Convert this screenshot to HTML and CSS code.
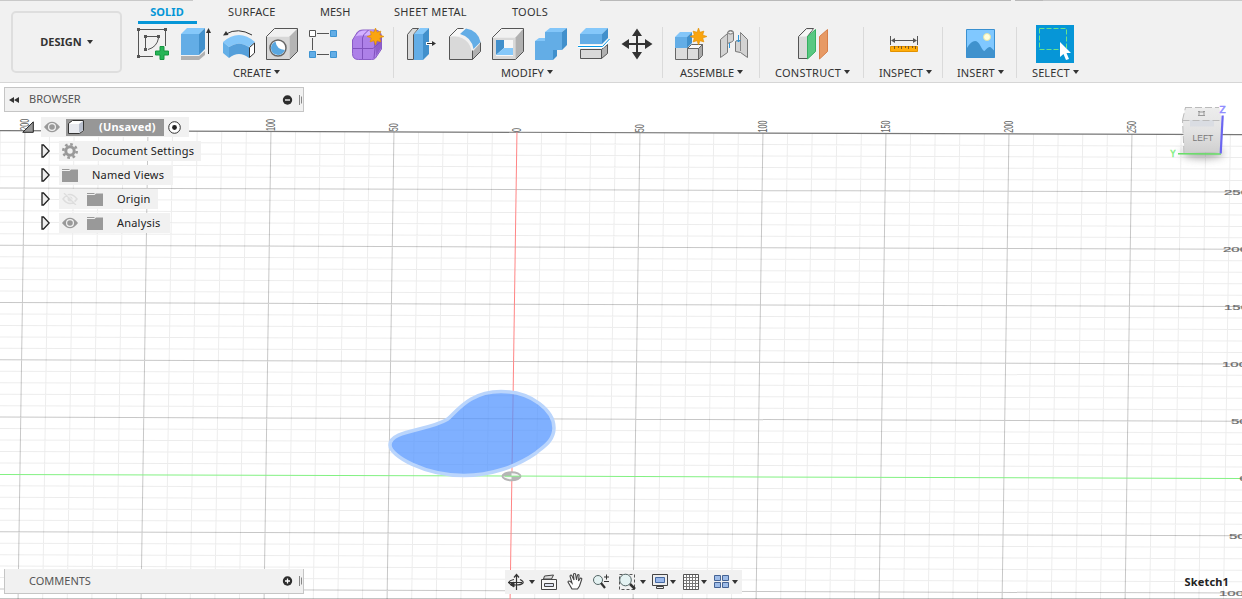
FILE: index.html
```html
<!DOCTYPE html>
<html lang="en">
<head>
<meta charset="utf-8">
<title>Sketch1</title>
<link rel="stylesheet" href="styles.css">
</head>
<body>
<svg class="defs" width="0" height="0">
  <symbol id="star" viewBox="-9 -9 18 18"><path fill="#faa50f" stroke="#e08e00" stroke-width=".6" d="M0-8.5 1.5-4.2 5.4-5.4 4.2-1.5 8.5 0 4.2 1.5 5.4 5.4 1.5 4.2 0 8.5-1.5 4.2-5.4 5.4-4.2 1.5-8.5 0-4.2-1.5-5.4-5.4-1.5-4.2z"/></symbol>
  <symbol id="eye" viewBox="0 0 16 12"><path fill="#999" d="M0 6Q8-4.500 16 6Q8 16.500 0 6z"/><circle cx="8" cy="6" r="4" fill="#f1f1f1"/><circle cx="8" cy="6" r="2.800" fill="#999"/></symbol>
  <symbol id="folder" viewBox="0 0 16 13"><path fill="#999" d="M0 0h7l1 1H0zM0 2h7.500l1.500-1.500h7V13H0z"/></symbol>
  <symbol id="closed" viewBox="0 0 9 14"><path fill="#eee" stroke="#222" stroke-width="1.300" d="M1 1h1.500L8.200 7 2.500 13H1z"/></symbol>
</svg>
<div class="app">
  <header class="toolbar">
    <div class="topline"><i class="edge first"></i><i class="edge second"></i><i class="edge third"></i><i class="edge fourth"></i></div>
    <div class="design-wrap"><button class="design">DESIGN<i class="caret"></i></button></div>
    <div class="ribbon">
      <nav class="tabs">
        <span class="tab active">SOLID</span><span class="tab surface">SURFACE</span><span class="tab mesh">MESH</span><span class="tab sheet">SHEET METAL</span><span class="tab tools">TOOLS</span>
      </nav>
      <div class="groups">
        <section class="group create">
          <div class="icons">
            <svg viewBox="132 25 43 38"><g fill="none" stroke="#555"><path d="M138.500 31v24M140 29.500h24M165.500 31v15M140 56.500h13M145.500 38v10M147 36.500h10M158.500 38Q157 47 148 49.500"/></g><path fill="#555" d="M137 28h3v3h-3zM164 28h3v3h-3zM137 55h3v3h-3zM144 35h3v3h-3zM157 35h3v3h-3zM144 48h3v3h-3z"/><path fill="#26b557" stroke="#169640" d="M160 46.500h4v4.500h4.500v4H164v4.500h-4v-4.500h-4.500v-4h4.500z"/></svg>
            <svg viewBox="175 25 43 38"><path fill="#b1b1b1" d="M181 56h18l6-5v4l-6 5h-18z"/><path fill="#63ade6" d="M181 34h18v21h-18z"/><path fill="#85c8fa" d="M181 34l6-6h18l-6 6z"/><path fill="#4190cc" d="M199 34l6-6v21l-6 6z"/><path d="M208.500 54V31" stroke="#333"/><path fill="#333" d="M206 33l2.500-5 2.500 5z"/></svg>
            <svg viewBox="218 25 43 38"><path fill="#83c6f9" d="M223 42Q239 28 255 42l-6 5q-10-7-20 0z"/><path fill="#64afe7" d="M223 42l6 5v11l-6-5z"/><path fill="#559fda" d="M229 47q10-7 20 0v11q-10-8-20 0z"/><path fill="#fff" stroke="#333" d="M249.500 47.500l5-4.500v10l-5 4.500z"/><path fill="none" stroke="#333" d="M226 34Q238 27 252 35"/><path fill="#333" d="M223 35.500l3-4.500 2.500 4z"/></svg>
            <svg viewBox="261 25 43 38"><path fill="#d7d7d7" d="M266.500 36.500h23v23h-23z"/><path fill="#f1f1f1" d="M266.500 36.500l8-8h23l-8 8z"/><path fill="#b5b5b5" d="M289.500 36.500l8-8v23l-8 8z"/><path fill="none" stroke="#555" d="M266.500 36.500l8-8h23v23l-8 8h-23z"/><circle cx="278" cy="48" r="8" fill="#fff" stroke="#666" stroke-width="1.500"/><path fill="#59a7e0" d="M275.500 41.500q1 8 9.500 8.500-2.500 5-7 5-7-1-7-7 0-4.500 4.500-6.500z"/></svg>
            <svg viewBox="304 25 43 38"><path d="M312.500 38v12M317 33.500h12M317 54.500h12" stroke="#555"/><path fill="#fff" stroke="#555" d="M309.500 30.500h6v6h-6z"/><path fill="#63ade6" stroke="#3e94d2" d="M330.500 30.500h6v6h-6zM330.500 51.500h6v6h-6zM309.500 51.500h6v6h-6z"/></svg>
            <svg viewBox="347 25 43 38"><path fill="#ad80e8" stroke="#8a5cc7" d="M352.500 40l5-8q2-2 5-2h12q6 0 7 6v13l-6 9q-1 1.500-4 1.500h-13q-6 0-6-6z"/><path fill="#d3b0ff" d="M354 38l5-6q2-1.500 5-1.500h10l-5 5h-9q-5 0-6 2.500z"/><path fill="#8051bd" d="M375 38l6-4v14l-5 8z" opacity=".7"/><path fill="none" stroke="#8051bd" d="M353 48.500h20l8-7M362.500 59V38q0-3 6-8M374 58q2-10 0-20"/><use href="#star" x="366.500" y="27.500" width="18" height="18"/></svg>
          </div>
          <div class="label">CREATE<i class="caret"></i></div>
        </section>
        <section class="group modify">
          <div class="icons">
            <svg viewBox="400 25 43 38"><path fill="#d9d9d9" stroke="#555" d="M407.500 34.500l5-6h6l-5 6v25h-6z"/><path fill="#63ade6" d="M414 34h9v26h-9z"/><path fill="#85c8fa" d="M414 34l6-6h9l-6 6z"/><path fill="#4190cc" d="M423 34l6-6v26l-6 6z"/><path d="M426 43.500h6" stroke="#fff" stroke-width="3"/><path d="M427 43.500h6" stroke="#333"/><path fill="#333" d="M432 41l4 2.500-4 2.500z"/></svg>
            <svg viewBox="443 25 43 38"><path fill="#d9d9d9" d="M449.500 36.500h5q18 1 18 23h-23z"/><path fill="#f7f7f7" d="M449.500 36l8-7.500h9l-7 7.500z"/><path fill="#b1b1b1" d="M473 51l7.500-8v8.500l-8 8z"/><path fill="none" stroke="#555" d="M449.500 36.500l8-8h6M449.500 36.500v23h23l8-8v-9M472.500 59.500v-9"/><path fill="#63ade6" d="M460 34l6-5.500q12 2 14.500 13.500l-7 7q-2-12-13.500-15z"/></svg>
            <svg viewBox="486 25 43 38"><path fill="#d9d9d9" d="M492.500 37.500h23v22h-23z"/><path fill="#f1f1f1" d="M492.500 37.500l9-9h22l-8 9z"/><path fill="#b1b1b1" d="M515.500 37.500l8-9v23l-8 8z"/><path fill="none" stroke="#555" d="M492.500 37.500l9-9h22v23l-8 8h-23z"/><path fill="#f7f7f7" d="M496 40h17v16h-17z"/><path fill="#418fcb" d="M496 40h8v8l-8 7z"/><path fill="#85c8fa" d="M496 55l8-7h9v7z"/></svg>
            <svg viewBox="529 25 43 38"><path fill="#63ade6" d="M535 41h10v-9h17v18h-9v10h-18z"/><path fill="#83c6f9" d="M535 41l4-3h6v3zM545 32l5-4h17l-5 4z"/><path fill="#4190cc" d="M562 32l5-4v17l-5 5zM553 50h4v6l-4 4z"/></svg>
            <svg viewBox="572 25 43 38"><path fill="#d9d9d9" stroke="#555" d="M580.500 49.500h21v9h-21z"/><path fill="#b1b1b1" stroke="#555" d="M601.500 49.500l6-5v9l-6 5z"/><path fill="#63ade6" d="M580 34h22v10h-22z"/><path fill="#85c8fa" d="M580 34l6-6h22l-6 6z"/><path fill="#4190cc" d="M602 34l6-6v10l-6 6z"/><path fill="none" stroke="#fff" stroke-width="3" d="M578 46.500h24.500l7-7"/><path fill="none" stroke="#0797e5" d="M578 46.500h24.500l7-7.500"/></svg>
            <svg viewBox="615 25 43 38"><path d="M624 44h26M637 31v26" stroke="#333" stroke-width="2"/><path fill="#333" d="M621.500 44l7.500-5v10zM652.500 44l-7.500-5v10zM637 28.500l-5 7.500h10zM637 59.500l-5-7.500h10z"/></svg>
          </div>
          <div class="label">MODIFY<i class="caret"></i></div>
        </section>
        <section class="group assemble">
          <div class="icons">
            <svg viewBox="668 25 43 38"><path fill="#dcdcdc" stroke="#666" d="M675.500 47.500h12v12h-12zM687.500 48.500h11v11h-11z"/><path fill="#f7f7f7" stroke="#666" d="M687.500 48.500l4-4h11l-4 4z"/><path fill="#aaa" stroke="#666" d="M698.500 48.500l4-4v11l-4 4z"/><path fill="#63ade6" d="M675 37h12v11h-12z"/><path fill="#83c6f9" d="M675 37l5-5h12l-5 5z"/><path fill="#4190cc" d="M687 37l5-5v11l-5 5z"/><use href="#star" x="689.500" y="27.500" width="18" height="18"/></svg>
            <svg viewBox="711 25 43 38"><path fill="#d3d3d3" stroke="#777" d="M720.500 39.500l7-6q0-3 3-3 3 0 3 2v8l-2 1.500-4 1.500v9l-7 5zM740.500 32.500l7 7v18l-7-5-5-1v-10l2-1h3z"/><path d="M727.500 34v12M740.500 33v18" stroke="#888"/><ellipse cx="730.500" cy="32.500" rx="2.500" ry="1.500" fill="#f1f1f1" stroke="#777"/><path fill="none" stroke="#2d96db" d="M729.500 43v5M738.500 35v7M736.500 40l2 2 2-2"/></svg>
          </div>
          <div class="label">ASSEMBLE<i class="caret"></i></div>
        </section>
        <section class="group construct">
          <div class="icons">
            <svg viewBox="791 25 43 38"><path fill="#dadada" stroke="#555" d="M798.500 36.500l8-8h7l-6 8v22h-9z"/><path fill="#f7f7f7" d="M799.500 36.500l7-7h6l-6 7z"/><path fill="#59c882" stroke="#36af61" d="M807.500 36.500l8-7v22l-8 7.500z"/><path fill="#e79a65" stroke="#d77f49" d="M819.500 36.500l8-7v22l-8 7.500z"/></svg>
          </div>
          <div class="label">CONSTRUCT<i class="caret"></i></div>
        </section>
        <section class="group inspect">
          <div class="icons">
            <svg viewBox="882 25 43 38"><path d="M890.500 36v9M917.500 36v9M893 40.500h22" stroke="#555"/><path fill="#555" d="M891 40.500l4-2.500v5zM917 40.500l-4-2.500v5z"/><path fill="#ffad0a" stroke="#e39200" d="M890.500 46.500h27v5h-27z"/><path d="M894.500 46v3M898.500 46v2M901.500 46v3M905.500 46v2M908.500 46v3M912.500 46v2M915.500 46v3" stroke="#7d5720"/></svg>
          </div>
          <div class="label">INSPECT<i class="caret"></i></div>
        </section>
        <section class="group insert">
          <div class="icons">
            <svg viewBox="959 25 43 38"><path fill="#80c8ff" d="M966.500 29.500h28v28h-28z"/><path fill="#4092cd" d="M967 48q4-7 8-7 3 0 5.500 5t4 5q5-6 7-3l3 3v7h-28z"/><circle cx="987" cy="37" r="3.500" fill="#ffffdc" stroke="#e1e4aa"/><path fill="none" stroke="#3a90d0" d="M966.500 29.500h28v28h-28z"/></svg>
          </div>
          <div class="label">INSERT<i class="caret"></i></div>
        </section>
        <section class="group select">
          <div class="icons">
            <svg viewBox="1033 25 43 38"><path fill="#0696d7" d="M1036 25h38v38h-38z"/><path fill="none" stroke="#6be389" stroke-dasharray="5 2" d="M1039.500 28.500h27v21h-27z"/><path fill="#fff" d="M1060 42v15l3.500-3 2.500 6 3-1-2.500-6h4.500z"/></svg>
          </div>
          <div class="label">SELECT<i class="caret"></i></div>
        </section>
      </div>
    </div>
  </header>

  <main class="workspace">
    <svg class="canvas" viewBox="0 83 1242 516">
      <g id="grid" transform="matrix(1 .0033 -.0147 1 511.900 476.100)"></g>
      <g class="ruler" id="ruler"></g>
      <path fill="rgba(77,145,255,.72)" stroke="#bad5fc" stroke-width="3.500" d="M390 445C390 430 428 431 447 419.500C456 413 468 391.500 501 391.500C532 391.500 554 411 554 428C554 441 543 447 536 453C516 467 490 475.500 464 475.500C425 475.500 390 456 390 445z"/>
      <g transform="translate(511.500 476.200)"><ellipse rx="9" ry="4" fill="#f5f5f5" stroke="#b5b5b5" stroke-width="2"/><path fill="#b5b5b5" d="M0 0h-9q0-4 9-4zM0 0h9q0 4-9 4z"/><path d="M-7 0H9" stroke="#83ed83"/></g>
      <g class="cube">
        <ellipse cx="1203" cy="153" rx="21" ry="5" fill="#777" class="shadow"/>
        <path fill="url(#cubeFace)" d="M1182.500 120l3-12.500h34l2 12.500-1 32-36 1z"/>
        <path fill="#dadde3" d="M1190 120h24v6.500h-24z"/>
        <path fill="none" stroke="#bbb" stroke-dasharray="7 3" d="M1182.500 120.500h39M1185 107.500h34M1182.500 120l3-12.500M1184 153l-1.500-33"/>
        <text x="1192.500" y="140.500" class="face">LEFT</text>
        <path fill="none" stroke="#999" d="M1198 115.500h7M1199 115v-3h5v3M1198 111.500h2M1203 111.500h2"/>
        <path d="M1178 153.700l43 .3" stroke="#65df65" stroke-width="1.600"/>
        <path d="M1222.700 115.500l-2 38" stroke="#6b66f1" stroke-width="2.200"/>
        <text x="1219.500" y="113" class="axis-z">Z</text><text x="1170.500" y="157" class="axis-y">Y</text>
      </g>
      <defs><linearGradient id="cubeFace" x2="0" y2="1"><stop stop-color="#ededed"/><stop offset=".5" stop-color="#e3e3e3"/><stop offset="1" stop-color="#cfcfcf"/></linearGradient></defs>
    </svg>

    <aside class="side">
      <div class="panel">
        <svg class="rewind" width="10" height="6" viewBox="0 0 10 6"><path fill="#333" d="M0 3l5-3v6zM5 3l5-3v6z"/></svg>
        <span class="panel-title browser-title">BROWSER</span>
        <svg class="panel-end" width="20" height="12" viewBox="0 0 20 12"><circle cx="5.500" cy="6" r="4.700" fill="#2d2d2d"/><path d="M3 6h5" stroke="#fff" stroke-width="1.300"/><path d="M17.500 1v10M19.500 2.500v7" stroke="#888"/></svg>
      </div>
      <div class="tree">
        <div class="row root">
          <svg class="open" width="12" height="12" viewBox="0 0 12 12"><path fill="#999" stroke="#222" d="M.8 11.300L11.300.800v10.500z"/></svg>
          <div class="chip"><svg width="16" height="12"><use href="#eye"/></svg>
            <div class="doc"><svg width="18" height="16" viewBox="0 0 18 16"><path fill="#fff" stroke="#333" d="M1.500 4.500l4-3h11v10l-4 3h-11z"/><path fill="#e8eaef" d="M2 5h10v9H2z"/><path fill="#b9c0ce" d="M12 5l4-3v9l-4 3z"/></svg><b>(Unsaved)</b></div>
            <svg width="13" height="13" viewBox="0 0 13 13"><circle cx="6.500" cy="6.500" r="5.800" fill="#fff" stroke="#333"/><circle cx="6.500" cy="6.500" r="2.400" fill="#222"/></svg>
          </div>
        </div>
        <div class="row"><svg class="tri" width="9" height="14"><use href="#closed"/></svg><div class="chip settings"><svg width="16" height="16" viewBox="-8 -8 16 16"><circle r="4.200" fill="none" stroke="#999" stroke-width="3"/><circle r="6.700" fill="none" stroke="#999" stroke-width="2.600" stroke-dasharray="2.630 2.630"/></svg><span>Document Settings</span></div></div>
        <div class="row"><svg class="tri" width="9" height="14"><use href="#closed"/></svg><div class="chip views"><svg width="16" height="13"><use href="#folder"/></svg><span>Named Views</span></div></div>
        <div class="row"><svg class="tri" width="9" height="14"><use href="#closed"/></svg><div class="chip origin"><svg width="16" height="12" viewBox="0 0 16 12"><path fill="none" stroke="#ddd" stroke-width="1.500" d="M1 6Q8-3 15 6Q8 15 1 6zM2 0l12 12"/><circle cx="8" cy="6" r="2.500" fill="#ddd"/><path d="M3.500 0l12 12" stroke="#f1f1f1"/></svg><svg class="node-folder" width="16" height="13"><use href="#folder"/></svg><span>Origin</span></div></div>
        <div class="row"><svg class="tri" width="9" height="14"><use href="#closed"/></svg><div class="chip analysis"><svg width="16" height="12"><use href="#eye"/></svg><svg class="node-folder" width="16" height="13"><use href="#folder"/></svg><span>Analysis</span></div></div>
      </div>
      <div class="panel comments">
        <span class="panel-title comments-title">COMMENTS</span>
        <svg class="panel-end" width="20" height="12" viewBox="0 0 20 12"><circle cx="5.500" cy="6" r="4.700" fill="#2d2d2d"/><path d="M3 6h5M5.500 3.500v5" stroke="#fff" stroke-width="1.300"/><path d="M17.500 1v10M19.500 2.500v7" stroke="#888"/></svg>
      </div>
    </aside>

    <div class="navbar">
      <svg width="237" height="24" viewBox="505 570 237 24">
        <path fill="#333" d="M529 580h6l-3 4zM640 580h6l-3 4zM670 580h6l-3 4zM701 580h6l-3 4zM732 580h6l-3 4z"/>
        <g fill="none" stroke="#333"><path d="M516.500 576v14M514 577.500l2.500-3 2.500 3M520 579.500q4 2 3 3.500-2 2-7 2-7 0-7-2.500 0-2 5-3M508 582.500h14" stroke-width="1.200"/><path fill="#333" d="M510 584.500l4-2.500v5z"/></g>
        <path fill="#f7f7f7" stroke="#444" d="M541.500 579.500h15v10h-15z"/><path fill="#dbe1f1" stroke="#444" d="M544.500 583.500h9v3h-9z"/><path fill="#ddd" stroke="#444" d="M543.500 579l1-3 9-1-2 4z"/>
        <path fill="#fff" stroke="#444" stroke-width="1.100" d="M572 589l-4-7q0-2 3 0l1 1-2-7q1-2 2 0l2 4-.5-6q1.500-1 2 0l1 6 1-5q2-1 1.500 1l-.5 5 2-3q2 0 1 2l-2 6-2 3z"/>
        <circle cx="598" cy="580" r="4.500" fill="#e4f2f2" stroke="#566"/><path d="M601 583l4 5" stroke="#333" stroke-width="2.200"/><path d="M604 577h5M606.500 574.500v5M604 581.500h5" stroke="#333"/>
        <path fill="none" stroke="#555" stroke-dasharray="3 2" d="M619.500 574.500h15v15h-15z"/><circle cx="625.500" cy="580" r="5.800" fill="#e4f2f2" stroke="#566"/><path d="M630 584l5 5" stroke="#333" stroke-width="2.500"/>
        <path fill="#eee" stroke="#444" d="M652.500 574.500h15v11h-15zM656.500 586.500h7v2h-7z"/><path fill="#9ab8ea" stroke="#4669a0" d="M655.500 577.500h9v5h-9z"/>
        <path fill="#fff" stroke="#555" d="M683.500 574.500h15v15h-15z"/><path stroke="#777" d="M686.500 575v14M689.500 575v14M692.500 575v14M695.500 575v14M684 577.500h14M684 580.500h14M684 583.500h14M684 586.500h14"/>
        <path fill="#9ebce8" stroke="#456394" d="M714.500 575.500h6v5h-6zM722.500 575.500h6v5h-6zM714.500 582.500h6v5h-6zM722.500 582.500h6v5h-6z"/>
      </svg>
    </div>
    <div class="status">Sketch1</div>
  </main>
</div>
<script src="grid.js"></script>
</body>
</html>
```
FILE: grid.js
```js
const NS = "http://www.w3.org/2000/svg";
const grid = document.getElementById("grid");
const ruler = document.getElementById("ruler");
const STEP_X = 24.6;
const STEP_Y = 11.46;
const TOP = -30 * STEP_Y;

function add(parent, name, attrs, text) {
  const node = document.createElementNS(NS, name);
  for (const key in attrs) node.setAttribute(key, attrs[key]);
  if (text !== undefined) node.textContent = text;
  parent.appendChild(node);
}

let minor = "";
let major = "";
for (let i = -22; i <= 31; i++) {
  const segment = `M${i * STEP_X} ${TOP}V130`;
  if (i % 5) minor += segment; else if (i) major += segment;
}
for (let j = -29; j <= 12; j++) {
  const segment = `M-530 ${j * STEP_Y}H750`;
  if (j % 5) minor += segment; else if (j) major += segment;
}
add(grid, "path", { d: minor, class: "minor" });
add(grid, "path", { d: major, class: "major" });
add(grid, "path", { d: `M-530 ${TOP}H750`, class: "horizon" });
add(grid, "path", { d: `M0 ${TOP}V130`, class: "axis-red" });
add(grid, "path", { d: "M-530 0H750", class: "axis-green" });

for (let k = -4; k <= 5; k++) {
  const x = 520.8 + k * 123;
  const y = 132 + k * 0.2 - (k < 0 ? 0.5 : 0);
  const value = String(Math.abs(k * 50));
  add(ruler, "text", { transform: `translate(${x} ${y}) rotate(-90) scale(.6 1)` }, value);
}
const rows = [[1224, 194.5, "250"], [1223, 252, "200"], [1224, 309.5, "150"], [1222, 366.5, "100"],
  [1231, 424, "50"], [1239.5, 481, "0"], [1229, 538.5, "50"], [1219, 596, "100"]];
for (const [x, y, value] of rows) {
  add(ruler, "text", { class: "wide", transform: `translate(${x} ${y}) scale(1.25 .6)` }, value);
}
```
FILE: styles.css
```css
* { box-sizing: border-box; }
body { margin: 0; overflow: hidden; font-family: "Noto Sans", sans-serif; color: #333; }
.defs { position: absolute; }
.app { width: 1242px; height: 599px; display: flex; flex-direction: column; background: #fff; }
svg { display: block; flex: none; }

.toolbar { position: relative; height: 83px; display: flex; background: #f1f1f1; border-bottom: 1px solid #d6d6d6; flex: none; }
.topline { position: absolute; inset: 0 0 auto 0; height: 1px; display: flex; }
.edge { background: #c9c9c9; flex: none; }
.first { width: 193px; }
.second { width: 411px; margin-left: 407px; background: #b9b9b9; }
.third { width: 28px; margin-left: 4px; background: #b9b9b9; }
.fourth { flex: 1; }
.design-wrap { width: 132px; padding: 11px 10px 10px 11px; flex: none; }
.design { width: 111px; height: 62px; display: flex; align-items: center; justify-content: center; border: 2px solid #dedede; border-radius: 5px; background: #f1f1f1; padding: 0 0 1px; font: 700 11px "Noto Sans", sans-serif; color: #333; }
.caret { display: inline-block; border: solid transparent; border-width: 4px 3px 0; border-top-color: #333; margin-left: 5px; }
.tabs { height: 24px; display: flex; font-size: 11px; line-height: 24px; white-space: nowrap; }
.tab { flex: none; }
.active { width: 59px; margin-left: 6px; padding-right: 1px; text-align: center; border-bottom: 3px solid #0696d7; color: #0696d7; font-weight: 700; letter-spacing: .1px; }
.surface { width: 48px; margin-left: 31px; letter-spacing: .2px; }
.mesh { width: 29px; margin-left: 44px; }
.sheet { width: 73px; margin-left: 45px; letter-spacing: .3px; }
.tools { margin-left: 45px; letter-spacing: .2px; }
.groups { display: flex; padding-top: 1px; }
.group { position: relative; flex: none; height: 57px; }
.group + .group::before { content: ""; position: absolute; left: -1px; top: 2px; width: 1px; height: 51px; background: #dadada; }
.icons { display: flex; }
.icons svg { width: 43px; height: 38px; }
.label { display: flex; align-items: center; height: 19px; line-height: 19px; font-size: 11px; white-space: nowrap; }
.label .caret { margin: -1px 0 0 3px; }
.create { width: 262px; }
.create .label { padding-left: 101px; }
.modify { width: 269px; padding-left: 6px; }
.modify .label { padding-left: 101px; letter-spacing: .1px; }
.assemble { width: 97px; padding-left: 5px; }
.assemble .label { padding-left: 12px; }
.construct { width: 104px; }
.construct .icons { padding-left: 31px; }
.construct .label { padding-left: 15px; letter-spacing: .25px; }
.inspect { width: 79px; }
.inspect .icons { padding-left: 18px; }
.inspect .label { padding-left: 15px; }
.insert { width: 74px; }
.insert .icons { padding-left: 16px; }
.insert .label { padding-left: 14px; letter-spacing: .1px; }
.select { width: 75px; }
.select .icons { padding-left: 16px; }
.select .label { padding-left: 15px; letter-spacing: .1px; }

.workspace { position: relative; flex: 1; border-bottom: 1px solid #c4c4c4; }
.canvas { position: absolute; left: 0; top: 0; width: 1242px; height: 516px; }
.minor { stroke: #000; stroke-opacity: .075; fill: none; }
.major { stroke: #000; stroke-opacity: .22; fill: none; }
.horizon { stroke: #777; stroke-width: 1.2; }
.axis-red { stroke: #ff8585; }
.axis-green { stroke: #83f183; }
.ruler text { font: 12px "Liberation Sans", sans-serif; fill: #666; }
.ruler .wide { stroke: #777; stroke-width: .3; }
.shadow { filter: blur(4px); opacity: .7; }
.face { font: 8.5px "Liberation Sans", sans-serif; fill: #777; }
.axis-z { font: 9px "DejaVu Sans", sans-serif; fill: #8f8cff; stroke: #8f8cff; stroke-width: .5; }
.axis-y { font: 8px "DejaVu Sans", sans-serif; fill: #85f085; stroke: #85f085; stroke-width: .5; }

.side { position: relative; width: 304px; height: 511px; padding: 4px 0 0 4px; display: flex; flex-direction: column; }
.panel { height: 25px; display: flex; align-items: center; border: 1px solid #c5c5c5; background: #f1f1f1; padding: 0 1px 0 4px; font-size: 11px; color: #555; flex: none; }
.panel-title { padding-bottom: 2px; }
.browser-title { margin-left: 10px; }
.panel-end { margin-left: auto; }
.comments { margin-top: auto; border-top: 0; }
.comments-title { margin-left: 20px; }
.tree { padding-top: 3px; font-size: 11px; color: #222; }
.row { height: 24px; display: flex; align-items: center; padding-left: 37px; }
.root { padding-left: 18px; }
.open { margin-right: 7px; }
.tri { margin-right: 9px; }
.chip { height: 20px; display: flex; align-items: center; background: #f1f1f1; padding-left: 3px; white-space: nowrap; letter-spacing: .2px; }
.root .chip { width: 148px; }
.doc { width: 98px; height: 17px; margin: 0 4px 0 6px; display: flex; align-items: center; background: #979797; color: #fff; }
.doc b { margin-left: 14px; padding-bottom: 2px; }
.doc svg { margin-left: 1px; }
.chip span { margin-left: 14px; padding-bottom: 2px; }
.settings { width: 142px; }
.views { width: 114px; }
.origin { width: 99px; }
.analysis { width: 111px; }
.node-folder { margin-left: 9px; }
.navbar { position: absolute; left: 505px; bottom: 4px; background: #f1f1f1; }
.status { position: absolute; right: 13px; bottom: 8px; font-size: 11px; line-height: 16px; font-weight: 700; color: #222; letter-spacing: .15px; }
```
